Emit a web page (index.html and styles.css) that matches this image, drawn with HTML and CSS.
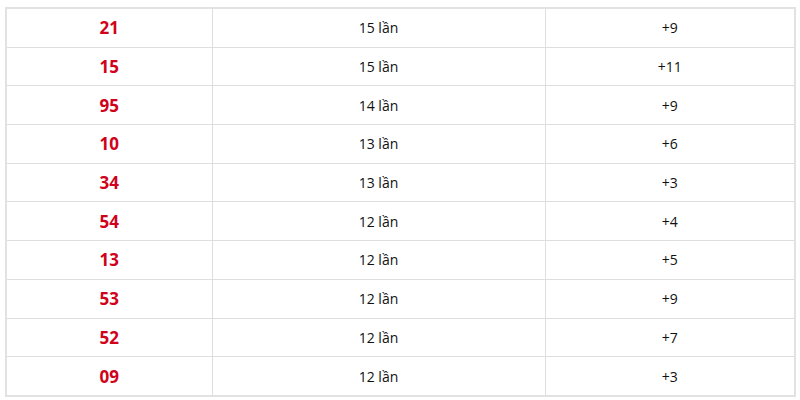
FILE: index.html
```html
<!DOCTYPE html>
<html>
<head>
<meta charset="utf-8">
<link rel="stylesheet" href="styles.css">
</head>
<body>
<table class="stats">
  <colgroup><col class="c1"><col class="c2"><col class="c3"></colgroup>
  <tbody>
    <tr><td class="num">21</td><td>15 lần</td><td>+9</td></tr>
    <tr><td class="num">15</td><td>15 lần</td><td>+11</td></tr>
    <tr><td class="num">95</td><td>14 lần</td><td>+9</td></tr>
    <tr><td class="num">10</td><td>13 lần</td><td>+6</td></tr>
    <tr><td class="num">34</td><td>13 lần</td><td>+3</td></tr>
    <tr><td class="num">54</td><td>12 lần</td><td>+4</td></tr>
    <tr><td class="num">13</td><td>12 lần</td><td>+5</td></tr>
    <tr><td class="num">53</td><td>12 lần</td><td>+9</td></tr>
    <tr><td class="num">52</td><td>12 lần</td><td>+7</td></tr>
    <tr><td class="num">09</td><td>12 lần</td><td>+3</td></tr>
  </tbody>
</table>
</body>
</html>
```
FILE: styles.css
```css
html, body {
  margin: 0;
  background: #fff;
}
body {
  padding: 7px 0 0 5px;
  font-family: "Open Sans", "Noto Sans", sans-serif;
  color: #111;
}
.stats {
  border-collapse: collapse;
  width: 789px;
  table-layout: fixed;
  border: 2px solid #e2e2e2;
}
.c1 { width: 206px; }
.c2 { width: 333px; }
.c3 { width: 250px; }
.stats td {
  border: 1px solid #dedede;
  height: 37.7px;
  padding: 0;
  text-align: center;
  vertical-align: middle;
  font-size: 14px;
}
.stats td.num {
  color: #d0021b;
  font-weight: 700;
  font-size: 17px;
}
```
